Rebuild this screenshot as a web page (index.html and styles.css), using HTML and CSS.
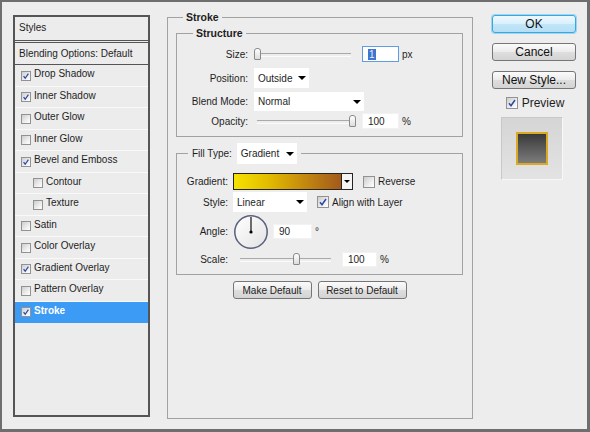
FILE: index.html
```html
<!DOCTYPE html>
<html>
<head>
<meta charset="utf-8">
<title>Layer Style - Stroke</title>
<link rel="stylesheet" href="styles.css">
</head>
<body>
<div class="window">
  <div class="styles-list">
    <div class="list-head">Styles</div>
    <div class="list-blend">Blending Options: Default</div>
    <div class="list-row"><span class="cb"><svg viewBox="0 0 10 10"><path d="M2 5.2L4 7.8L8 2"/></svg></span>Drop Shadow</div>
    <div class="list-row"><span class="cb"><svg viewBox="0 0 10 10"><path d="M2 5.2L4 7.8L8 2"/></svg></span>Inner Shadow</div>
    <div class="list-row"><span class="cb"></span>Outer Glow</div>
    <div class="list-row"><span class="cb"></span>Inner Glow</div>
    <div class="list-row"><span class="cb"><svg viewBox="0 0 10 10"><path d="M2 5.2L4 7.8L8 2"/></svg></span>Bevel and Emboss</div>
    <div class="list-row sub"><span class="cb"></span>Contour</div>
    <div class="list-row sub"><span class="cb"></span>Texture</div>
    <div class="list-row"><span class="cb"></span>Satin</div>
    <div class="list-row"><span class="cb"></span>Color Overlay</div>
    <div class="list-row"><span class="cb"><svg viewBox="0 0 10 10"><path d="M2 5.2L4 7.8L8 2"/></svg></span>Gradient Overlay</div>
    <div class="list-row"><span class="cb"></span>Pattern Overlay</div>
    <div class="list-row selected"><span class="cb"><svg viewBox="0 0 10 10"><path d="M2 5.2L4 7.8L8 2"/></svg></span>Stroke</div>
  </div>

  <fieldset class="stroke">
    <legend>Stroke</legend>
    <div class="stroke-body">
      <fieldset class="group structure">
        <legend>Structure</legend>
        <div class="form struct-form">
          <span class="lbl">Size:</span>
          <div class="ctl">
            <div class="slider w99"><span class="thumb" style="left:0px"></span></div>
            <span class="field focus w37"><span class="seltext">1</span></span>
            <span class="unit">px</span>
          </div>

          <span class="lbl">Position:</span>
          <div class="ctl">
            <div class="dd w55">Outside<span class="arr"></span></div>
          </div>

          <span class="lbl">Blend Mode:</span>
          <div class="ctl">
            <div class="dd w110 h19">Normal<span class="arr"></span></div>
          </div>

          <span class="lbl">Opacity:</span>
          <div class="ctl">
            <div class="slider w99"><span class="thumb" style="left:95px"></span></div>
            <span class="field w37">100</span>
            <span class="unit">%</span>
          </div>
        </div>
      </fieldset>

      <fieldset class="group fill">
        <legend><span>Fill Type:</span><span class="dd w60 h21">Gradient<span class="arr"></span></span></legend>
        <div class="form fill-form">
          <span class="lbl">Gradient:</span>
          <div class="ctl">
            <div class="gbar"><span class="gfill"></span><span class="garr"><span class="arr small"></span></span></div>
            <span class="cb big ml10"></span>
            <span class="cbtext">Reverse</span>
          </div>

          <span class="lbl">Style:</span>
          <div class="ctl">
            <div class="dd w74">Linear<span class="arr"></span></div>
            <span class="cb big ml10"><svg viewBox="0 0 10 10"><path d="M2 5.2L4 7.8L8 2"/></svg></span>
            <span class="cbtext">Align with Layer</span>
          </div>

          <span class="lbl">Angle:</span>
          <div class="ctl">
            <svg class="dial" width="36" height="36" viewBox="0 0 36 36">
              <defs>
                <linearGradient id="dg" x1="0" y1="0" x2="1" y2="1">
                  <stop offset="0" stop-color="#ffffff"/>
                  <stop offset="1" stop-color="#e2e2e2"/>
                </linearGradient>
              </defs>
              <circle cx="18" cy="18" r="16.2" fill="url(#dg)" stroke="#58617a" stroke-width="1.5"/>
              <line x1="18" y1="18" x2="18" y2="3" stroke="#111" stroke-width="1.2"/>
              <circle cx="18" cy="18" r="1.6" fill="#000"/>
            </svg>
            <span class="field w39 h15 ml4">90</span>
            <span class="deg">°</span>
          </div>

          <span class="lbl">Scale:</span>
          <div class="ctl">
            <div class="slider w96 ml4"><span class="thumb" style="left:56px"></span></div>
            <span class="field w35 h15 ml9">100</span>
            <span class="unit">%</span>
          </div>
        </div>
      </fieldset>

      <div class="defaults">
        <button class="btn small-btn w79">Make Default</button>
        <button class="btn small-btn w89">Reset to Default</button>
      </div>
    </div>
  </fieldset>

  <div class="side">
    <button class="btn ok">OK</button>
    <button class="btn">Cancel</button>
    <button class="btn">New Style...</button>
    <div class="preview-row"><span class="cb big"><svg viewBox="0 0 10 10"><path d="M2 5.2L4 7.8L8 2"/></svg></span>Preview</div>
    <div class="preview-box"><div class="swatch"></div></div>
  </div>
</div>
</body>
</html>
```

FILE: styles.css
```css
* { box-sizing: border-box; }
html, body { margin: 0; padding: 0; }
body {
  width: 590px;
  height: 432px;
  background: #ededed;
  font-family: "Liberation Sans", Arial, sans-serif;
  font-size: 10px;
  color: #1e1e1e;
  overflow: hidden;
}

.window {
  width: 590px;
  height: 432px;
  border: 2px solid #6e6e6e;
  border-right-width: 3px;
  border-bottom-width: 3px;
  background: #ededed;
  display: flex;
  align-items: flex-start;
  padding: 9px 0 0 11px;
}

/* ---------- Styles list ---------- */
.styles-list {
  width: 137px;
  height: 402px;
  margin-top: 4px;
  border: 2px solid #555;
  background: #ececec;
  display: flex;
  flex-direction: column;
}
.list-head {
  height: 26px;
  flex: none;
  border-bottom: 3px double #555;
  padding-left: 4px;
  padding-bottom: 2px;
  display: flex;
  align-items: center;
}
.list-blend {
  height: 22px;
  flex: none;
  border-bottom: 1px solid #555;
  padding-left: 4px;
  padding-bottom: 1px;
  display: flex;
  align-items: center;
}
.list-row {
  height: 21.5px;
  flex: none;
  border-bottom: 1px solid #f9f9f9;
  padding-left: 6px;
  padding-bottom: 3px;
  display: flex;
  align-items: center;
}
.list-row.sub { padding-left: 18px; }
.list-row .cb { margin-right: 3px; margin-top: 4px; }
.list-row.selected {
  background: #3c9bf4;
  color: #fff;
  font-weight: bold;
  border-bottom-color: #3c9bf4;
}

/* ---------- Checkbox ---------- */
.cb {
  width: 10px;
  height: 10px;
  flex: none;
  border: 1px solid #929292;
  background: linear-gradient(135deg, #cdcdcd 0%, #eeeeee 60%, #ffffff 100%);
  display: inline-flex;
}
.cb.big { width: 12px; height: 12px; }
.cb svg { width: 100%; height: 100%; }
.cb path { fill: none; stroke: #2a47a6; stroke-width: 1.5; }
.cbtext { margin-left: 3px; }

/* ---------- Fieldsets ---------- */
fieldset {
  margin: 0;
  padding: 0;
  min-width: 0;
  border: 1px solid #a2a2a2;
}
legend {
  padding: 0 3px;
  line-height: 12px;
  font-size: 10.5px;
  font-weight: bold;
  color: #1e1e1e;
}
.stroke {
  width: 306px;
  height: 408px;
  margin-left: 17px;
  flex: none;
}
.stroke > legend { margin-left: 15px; }
.stroke-body { padding: 4px 9px 0 8px; }

.group { width: 287px; }
.group > legend { margin-left: 16px; }

.fill { margin-top: 6px; }
.fill > legend {
  margin-left: 11px;
  padding: 0 4px;
  font-weight: normal;
  font-size: 10px;
  line-height: 21px;
  display: flex;
  align-items: center;
  gap: 5px;
}

/* ---------- Form grids ---------- */
.form { display: grid; align-items: center; }
.struct-form {
  grid-template-columns: 71px 1fr;
  column-gap: 6px;
  grid-template-rows: 20px 28px 19px 20px;
  padding: 5px 0 5px;
}
.fill-form {
  grid-template-columns: 51px 1fr;
  column-gap: 5px;
  grid-template-rows: 19px 22px 37px 18px;
  padding: 8px 0 6px;
}
.lbl { text-align: right; white-space: nowrap; }
.ctl { display: flex; align-items: center; }

/* ---------- Controls ---------- */
.slider { position: relative; height: 12px; flex: none; }
.slider::before {
  content: "";
  position: absolute;
  left: 3px;
  right: 2px;
  top: 5px;
  height: 2px;
  border-top: 1px solid #a9a9a9;
  border-bottom: 1px solid #fbfbfb;
}
.thumb {
  position: absolute;
  top: 0;
  width: 7px;
  height: 12px;
  border: 1px solid #8a8a8a;
  border-radius: 3px 3px 1px 1px;
  background: linear-gradient(#ffffff, #dcdcdc);
}
.w99 { width: 99px; }
.w96 { width: 96px; }

.field {
  height: 16px;
  background: #fff;
  border: 1px solid #f2f2f2;
  padding-left: 5px;
  display: flex;
  align-items: center;
  flex: none;
  margin-left: 9px;
}
.field.focus { border-color: #5e9de2; }
.seltext { background: #3f74cf; color: #e8eef8; padding: 0 1px; line-height: 11px; }
.w37 { width: 37px; }
.w39 { width: 39px; }
.w35 { width: 35px; }
.h15 { height: 15px; }
.ml4 { margin-left: 4px; }
.ml9 { margin-left: 9px; }
.ml10 { margin-left: 10px; }
.unit { margin-left: 3px; }
.deg { margin-left: 3px; align-self: flex-start; margin-top: 12px; font-size: 10px; }

.dd {
  height: 20px;
  background: #fff;
  padding: 0 3px 0 4px;
  display: flex;
  align-items: center;
  justify-content: space-between;
  flex: none;
}
.w55 { width: 55px; }
.w110 { width: 110px; }
.w60 { width: 60px; }
.w74 { width: 74px; }
.h19 { height: 19px; }
.h21 { height: 21px; line-height: 21px; }
.arr {
  width: 0;
  height: 0;
  border-left: 4px solid transparent;
  border-right: 4px solid transparent;
  border-top: 4px solid #000;
}
.arr.small {
  border-left-width: 3px;
  border-right-width: 3px;
  border-top-width: 3px;
}

.gbar {
  width: 120px;
  height: 17px;
  border: 1px solid #242424;
  display: flex;
  flex: none;
}
.gfill {
  flex: 1;
  background: linear-gradient(90deg, #f6e300 0%, #e0b800 35%, #c48a0e 65%, #a35a1c 100%);
}
.garr {
  width: 11px;
  border-left: 1px solid #242424;
  background: #f5f5f5;
  display: flex;
  align-items: center;
  justify-content: center;
}
.dial { flex: none; }

/* ---------- Buttons ---------- */
.btn {
  font-family: "Liberation Sans", Arial, sans-serif;
  height: 18px;
  width: 84px;
  padding: 0;
  border: 1px solid #767676;
  border-radius: 3px;
  background: linear-gradient(#fbfbfb 0%, #ececec 48%, #dedede 52%, #d3d3d3 100%);
  font-size: 12px;
  color: #111;
  display: flex;
  align-items: center;
  justify-content: center;
  flex: none;
}
.defaults {
  margin-top: 6px;
  display: flex;
  justify-content: center;
  gap: 6px;
}
.small-btn { font-size: 10px; color: #222; }
.w79 { width: 79px; }
.w89 { width: 89px; }

.side {
  width: 84px;
  margin-left: 19px;
  margin-top: 4px;
  flex: none;
  display: flex;
  flex-direction: column;
  gap: 10px;
}
.btn.ok {
  border-color: #3aa7e0;
  box-shadow: 0 0 0 1px #9bd5f2;
  background: linear-gradient(#eef8fe 0%, #d9f0fc 48%, #c2e5f8 52%, #b5dff6 100%);
}
.preview-row {
  height: 14px;
  margin-top: -3px;
  display: flex;
  align-items: center;
  justify-content: center;
  gap: 4px;
  font-size: 12px;
  padding-left: 2px;
}
.preview-box {
  width: 62px;
  height: 63px;
  margin-left: 9px;
  margin-top: -3px;
  border: 1px solid;
  border-color: #c8c8c8 #f8f8f8 #f8f8f8 #c8c8c8;
  background: linear-gradient(#d5d5d5, #e3e3e3);
  display: flex;
  align-items: center;
  justify-content: center;
}
.swatch {
  width: 32px;
  height: 33px;
  border: 2px solid #dcaa22;
  background: linear-gradient(#3a3a3a, #7c7c7c);
}
```
